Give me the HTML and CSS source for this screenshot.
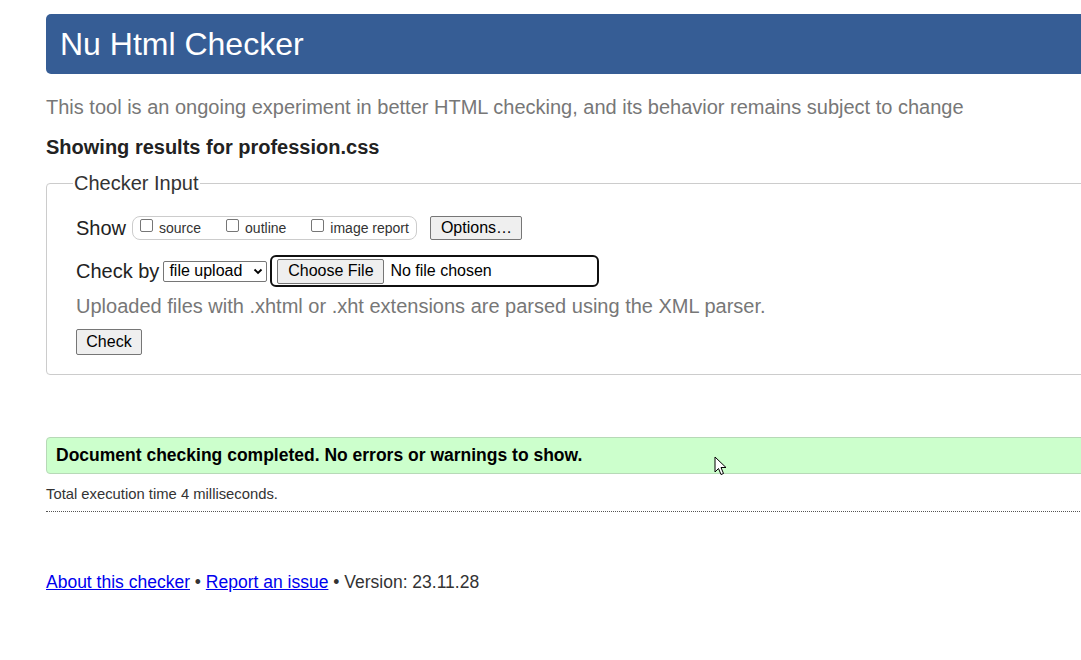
FILE: index.html
```html
<!DOCTYPE html>
<html>
<head>
<meta charset="utf-8">
<title>Nu Html Checker</title>
<link rel="stylesheet" href="styles.css">
</head>
<body>
<div class="page">
  <h1 class="banner">Nu Html Checker</h1>
  <p class="intro">This tool is an ongoing experiment in better HTML checking, and its behavior remains subject to change</p>
  <p class="showing">Showing results for profession.css</p>
  <fieldset class="input">
    <legend>Checker Input</legend>
    <div class="row show-row">
      <span class="lbl">Show</span>
      <span class="opts">
        <label class="opt"><span class="cb"></span>source</label>
        <label class="opt"><span class="cb"></span>outline</label>
        <label class="opt"><span class="cb"></span>image report</label>
      </span>
      <button class="btn options">Options…</button>
    </div>
    <div class="row check-row">
      <span class="lbl">Check by</span>
      <span class="select">file upload<svg width="10" height="7" viewBox="0 0 10 7"><path d="M1.5 1.5 L5 5 L8.5 1.5" fill="none" stroke="#000" stroke-width="1.8"/></svg></span>
      <span class="file"><button class="btn choose">Choose File</button><span class="nofile">No file chosen</span></span>
    </div>
    <p class="hint">Uploaded files with .xhtml or .xht extensions are parsed using the XML parser.</p>
    <button class="btn check">Check</button>
  </fieldset>
  <div class="success">Document checking completed. No errors or warnings to show.</div>
  <p class="time">Total execution time 4 milliseconds.</p>
  <hr class="sep">
  <p class="footer"><a href="#">About this checker</a> • <a href="#">Report an issue</a> • Version: 23.11.28</p>
</div>
<svg class="cursor" width="14" height="22" viewBox="0 0 14 22"><path d="M1 1 L1 16 L4.5 12.5 L7 18.5 L9.5 17.5 L7 11.5 L12 11.5 Z" fill="#fff" stroke="#000" stroke-width="1" stroke-linejoin="round"/></svg>
</body>
</html>
```
FILE: styles.css
```css
html, body { margin: 0; padding: 0; background: #fff; overflow: hidden; }
body { font-family: "Liberation Sans", Arial, sans-serif; color: #222; position: relative; width: 1081px; height: 660px; }
.page { margin-left: 46px; width: 1120px; padding-top: 14px; }
.banner { margin: 0; height: 60px; background: #365d95; color: #fff; font-weight: normal; font-size: 32px; line-height: 60px; padding-left: 14px; border-radius: 5px; }
.intro { margin: 20px 0 0; font-size: 20px; line-height: 26px; color: #777; }
.showing { margin: 14px 0 0; font-size: 20px; line-height: 26px; font-weight: bold; color: #222; }
.input { margin: 12px 0 0; border: 1px solid #ccc; border-radius: 4px; padding: 6px 29px 19px; font-size: 20px; color: #333; }
.input legend { padding: 0 1px; margin-left: -3px; font-size: 20px; color: #333; }
.row { display: flex; align-items: center; }
.show-row { margin-top: 12px; height: 30px; }
.lbl { font-size: 20px; color: #222; }
.opts { display: inline-flex; align-items: center; margin-left: 6px; height: 22px; border: 1px solid #ccc; border-radius: 8px; padding: 0 7px 0 7px; }
.opt { display: inline-flex; align-items: center; font-size: 14px; color: #333; margin-right: 25px; }
.opt:last-child { margin-right: 0; }
.cb { display: inline-block; width: 13px; height: 13px; border: 1px solid #767676; border-radius: 2px; box-sizing: border-box; margin-right: 6px; position: relative; top: -3px; background: #fff; }
.btn { font-family: "Liberation Sans", Arial, sans-serif; font-size: 16px; color: #000; background: #efefef; border: 1px solid #767676; border-radius: 2px; padding: 0 10px; height: 24px; line-height: 22px; }
.options { margin-left: 13px; width: 92px; }
.check-row { margin-top: 12px; height: 32px; }
.select { display: inline-flex; align-items: center; justify-content: space-between; width: 104px; margin-left: 4px; height: 21px; box-sizing: border-box; border: 1px solid #767676; border-radius: 2px; padding: 0 3px 0 5px; font-size: 16px; color: #000; background: #fff; }
.file { display: inline-flex; align-items: center; margin-left: 3px; width: 329px; height: 32px; box-sizing: border-box; border: 2px solid #101010; border-radius: 6px; padding-left: 5px; }
.choose { height: 25px; width: 107px; padding: 0; }
.nofile { font-size: 16px; color: #000; margin-left: 6px; }
.hint { margin: 6px 0 0; font-size: 20px; line-height: 26px; color: #777; }
.check { margin-top: 10px; height: 26px; width: 66px; padding: 0; }
.success { margin-top: 62px; height: 37px; box-sizing: border-box; background: #ccffcc; border: 1px solid #b7d9b7; border-radius: 4px; font-weight: bold; font-size: 17.5px; line-height: 35px; padding-left: 9px; color: #000; }
.time { margin: 11px 0 0; font-size: 14.8px; line-height: 18px; color: #333; }
.sep { margin: 8px 0 0; border: 0; border-top: 1px dotted #555; }
.footer { margin: 59px 0 0; font-size: 17.5px; line-height: 22px; color: #333; }
.footer a { color: #0000ee; }
.cursor { position: absolute; left: 714px; top: 456px; }
```
